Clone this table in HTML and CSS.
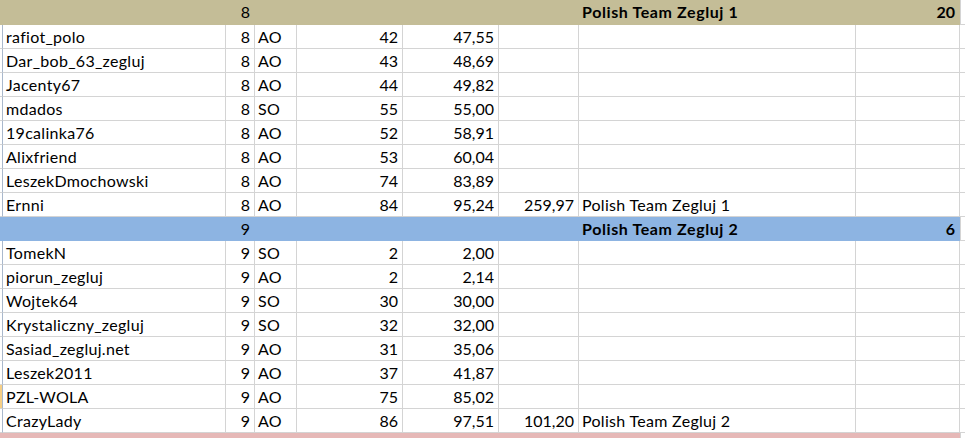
FILE: index.html
```html
<!DOCTYPE html>
<html>
<head>
<meta charset="utf-8">
<link rel="stylesheet" href="styles.css">
</head>
<body>
<div class="sheet">
  <div class="row fill tan">
    <div class="c stub"></div><div class="c"></div><div class="c r">8</div><div class="c"></div><div class="c"></div><div class="c"></div><div class="c"></div><div class="c b">Polish Team Zegluj 1</div><div class="c r b">20</div><div class="c extra"></div>
  </div>
  <div class="row"><div class="c stub"></div><div class="c">rafiot_polo</div><div class="c r">8</div><div class="c">AO</div><div class="c r">42</div><div class="c r">47,55</div><div class="c"></div><div class="c"></div><div class="c"></div><div class="c extra"></div></div>
  <div class="row"><div class="c stub"></div><div class="c">Dar_bob_63_zegluj</div><div class="c r">8</div><div class="c">AO</div><div class="c r">43</div><div class="c r">48,69</div><div class="c"></div><div class="c"></div><div class="c"></div><div class="c extra"></div></div>
  <div class="row"><div class="c stub"></div><div class="c">Jacenty67</div><div class="c r">8</div><div class="c">AO</div><div class="c r">44</div><div class="c r">49,82</div><div class="c"></div><div class="c"></div><div class="c"></div><div class="c extra"></div></div>
  <div class="row"><div class="c stub"></div><div class="c">mdados</div><div class="c r">8</div><div class="c">SO</div><div class="c r">55</div><div class="c r">55,00</div><div class="c"></div><div class="c"></div><div class="c"></div><div class="c extra"></div></div>
  <div class="row"><div class="c stub"></div><div class="c">19calinka76</div><div class="c r">8</div><div class="c">AO</div><div class="c r">52</div><div class="c r">58,91</div><div class="c"></div><div class="c"></div><div class="c"></div><div class="c extra"></div></div>
  <div class="row"><div class="c stub"></div><div class="c">Alixfriend</div><div class="c r">8</div><div class="c">AO</div><div class="c r">53</div><div class="c r">60,04</div><div class="c"></div><div class="c"></div><div class="c"></div><div class="c extra"></div></div>
  <div class="row"><div class="c stub"></div><div class="c">LeszekDmochowski</div><div class="c r">8</div><div class="c">AO</div><div class="c r">74</div><div class="c r">83,89</div><div class="c"></div><div class="c"></div><div class="c"></div><div class="c extra"></div></div>
  <div class="row"><div class="c stub"></div><div class="c">Ernni</div><div class="c r">8</div><div class="c">AO</div><div class="c r">84</div><div class="c r">95,24</div><div class="c r">259,97</div><div class="c">Polish Team Zegluj 1</div><div class="c"></div><div class="c extra"></div></div>
  <div class="row fill blue">
    <div class="c stub"></div><div class="c"></div><div class="c r">9</div><div class="c"></div><div class="c"></div><div class="c"></div><div class="c"></div><div class="c b">Polish Team Zegluj 2</div><div class="c r b">6</div><div class="c extra"></div>
  </div>
  <div class="row"><div class="c stub"></div><div class="c">TomekN</div><div class="c r">9</div><div class="c">SO</div><div class="c r">2</div><div class="c r">2,00</div><div class="c"></div><div class="c"></div><div class="c"></div><div class="c extra"></div></div>
  <div class="row"><div class="c stub"></div><div class="c">piorun_zegluj</div><div class="c r">9</div><div class="c">AO</div><div class="c r">2</div><div class="c r">2,14</div><div class="c"></div><div class="c"></div><div class="c"></div><div class="c extra"></div></div>
  <div class="row"><div class="c stub"></div><div class="c">Wojtek64</div><div class="c r">9</div><div class="c">SO</div><div class="c r">30</div><div class="c r">30,00</div><div class="c"></div><div class="c"></div><div class="c"></div><div class="c extra"></div></div>
  <div class="row"><div class="c stub"></div><div class="c">Krystaliczny_zegluj</div><div class="c r">9</div><div class="c">SO</div><div class="c r">32</div><div class="c r">32,00</div><div class="c"></div><div class="c"></div><div class="c"></div><div class="c extra"></div></div>
  <div class="row"><div class="c stub"></div><div class="c">Sasiad_zegluj.net</div><div class="c r">9</div><div class="c">AO</div><div class="c r">31</div><div class="c r">35,06</div><div class="c"></div><div class="c"></div><div class="c"></div><div class="c extra"></div></div>
  <div class="row"><div class="c stub"></div><div class="c">Leszek2011</div><div class="c r">9</div><div class="c">AO</div><div class="c r">37</div><div class="c r">41,87</div><div class="c"></div><div class="c"></div><div class="c"></div><div class="c extra"></div></div>
  <div class="row"><div class="c stub sel"></div><div class="c">PZL-WOLA</div><div class="c r">9</div><div class="c">AO</div><div class="c r">75</div><div class="c r">85,02</div><div class="c"></div><div class="c"></div><div class="c"></div><div class="c extra"></div></div>
  <div class="row"><div class="c stub"></div><div class="c">CrazyLady</div><div class="c r">9</div><div class="c">AO</div><div class="c r">86</div><div class="c r">97,51</div><div class="c r">101,20</div><div class="c">Polish Team Zegluj 2</div><div class="c"></div><div class="c extra"></div></div>
  <div class="row fill pink">
    <div class="c stub"></div><div class="c"></div><div class="c"></div><div class="c"></div><div class="c"></div><div class="c"></div><div class="c"></div><div class="c"></div><div class="c"></div><div class="c extra"></div>
  </div>
</div>
</body>
</html>
```

FILE: styles.css
```css
html, body {
  margin: 0;
  padding: 0;
  background: #ffffff;
}

body {
  font-family: Lato, "Open Sans", sans-serif;
  font-size: 16px;
  font-variant-ligatures: none;
  color: #000000;
  overflow: hidden;
}

.sheet {
  width: 965px;
}

.row {
  display: grid;
  grid-template-columns: 3px 223px 29px 42px 106px 96px 80px 277px 104px 1fr;
  height: 24px;
}

.c {
  box-sizing: border-box;
  border-right: 1px solid #d4d4d4;
  border-bottom: 1px solid #d4d4d4;
  padding: 0 3px 0 3px;
  line-height: 23px;
  white-space: nowrap;
  overflow: visible;
  letter-spacing: 0.3px;
}

.c.r {
  letter-spacing: 0;
}

.c.stub {
  padding: 0;
  background: #ffffff;
  border-right: 1px solid #a9b8cc;
}

.c.stub.sel {
  background: #f6cf86;
}

.r {
  text-align: right;
  padding-right: 4px;
}

.b {
  font-weight: 700;
  letter-spacing: 0.6px;
}

.fill .c {
  border-right-color: transparent;
  border-bottom-color: transparent;
}

.fill .c.extra {
  background: #ffffff;
  border-right: 1px solid #d4d4d4;
  border-bottom: 1px solid #d4d4d4;
  border-left: 1px solid #d4d4d4;
}

.tan {
  height: 25px;
}

.tan .c {
  background: #c4bd97;
  line-height: 24px;
}

.blue .c {
  background: #8db4e2;
}

.pink .c {
  background: #e6b8b7;
}

.tan .c.extra,
.blue .c.extra,
.pink .c.extra {
  background: #ffffff;
}
```
